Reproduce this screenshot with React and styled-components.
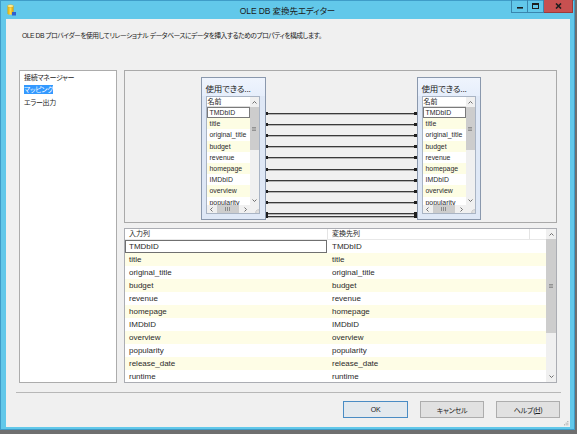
import React from 'react';
import styled, { createGlobalStyle } from 'styled-components';

const GlobalStyle = createGlobalStyle`
  html, body { margin: 0; padding: 0; }
  body {
    width: 577px;
    height: 434px;
    overflow: hidden;
    background: #6f6f6f;
    font-family: "Liberation Sans", "Noto Sans CJK JP", sans-serif;
    font-feature-settings: "palt";
    color: #1b1b1b;
  }
  * { box-sizing: border-box; }
`;

const COLUMNS = [
  'TMDbID', 'title', 'original_title', 'budget', 'revenue', 'homepage',
  'IMDbID', 'overview', 'popularity', 'release_date', 'runtime',
];

const Window = styled.div`
  width: 575px;
  height: 430px;
  background: #62c8ea;
  border: 1px solid #3f9cc8;
  display: flex;
  flex-direction: column;
`;

const TitleBar = styled.div`
  height: 18px;
  display: grid;
  grid-template-columns: 1fr auto 1fr;
  align-items: center;
`;

const AppIcon = styled.svg`
  margin-left: 6px;
  display: block;
`;

const TitleText = styled.div`
  font-size: 8.5px;
  line-height: 12px;
  color: #1a1a1a;
  white-space: nowrap;
  padding-top: 1px;
  letter-spacing: -0.1px;
`;

const Controls = styled.div`
  justify-self: end;
  align-self: start;
  display: flex;
  margin-top: -1px;
  margin-right: 1px;
`;

const CtrlBtn = styled.div`
  width: ${(p) => p.$w}px;
  height: 13px;
  display: flex;
  align-items: center;
  justify-content: center;
  background: ${(p) => (p.$close ? '#c75050' : 'transparent')};
  border: 1px solid ${(p) => (p.$close ? '#9c3b3b' : '#3a86ae')};
  border-top: none;
  & + & { border-left: none; }
`;

const Client = styled.div`
  flex: 1;
  margin: 0 4px 2px 5px;
  background: #f0f0f0;
  display: flex;
  flex-direction: column;
  position: relative;
`;

const Description = styled.div`
  height: 51px;
  padding: 11px 0 0 16px;
  font-size: 6.8px;
  letter-spacing: -0.5px;
  line-height: 12px;
  white-space: nowrap;
`;

const Main = styled.div`
  height: 313px;
  padding: 0 13px;
  display: flex;
  gap: 7px;
`;

const NavList = styled.div`
  width: 98px;
  border: 1px solid #acacac;
  background: #fff;
`;

const NavItem = styled.div`
  height: 12.5px;
  padding-left: 4px;
  display: flex;
  align-items: center;
  font-size: 7px;
  letter-spacing: -0.35px;
`;

const NavLabel = styled.span`
  display: inline-block;
  height: 9px;
  line-height: 9px;
  background: ${(p) => (p.$sel ? '#3399ff' : 'transparent')};
  color: ${(p) => (p.$sel ? '#fff' : '#1b1b1b')};
`;

const RightPanel = styled.div`
  flex: 1;
  display: flex;
  flex-direction: column;
`;

const Diagram = styled.div`
  height: 153px;
  border: 1px solid #a9a9a9;
  background: #f0f0f0;
  display: flex;
  justify-content: center;
  align-items: flex-start;
  padding-top: 6px;
`;

const TableNode = styled.div`
  width: ${(p) => p.$w}px;
  height: 143px;
  border: 1px solid #8a98ad;
  background: #dfe8f6;
  display: flex;
  flex-direction: column;
`;

const NodeTitle = styled.div`
  height: 18px;
  background: linear-gradient(#eff4fd, #e6eefb);
  padding: 5px 0 0 4px;
  font-size: 8.5px;
  letter-spacing: -0.2px;
  line-height: 12px;
  white-space: nowrap;
  color: #1a1a1a;
`;

const NodeList = styled.div`
  margin-left: 4px;
  width: 54px;
  height: 118px;
  border: 1px solid #a9b4c4;
  background: #fff;
  display: grid;
  grid-template-columns: 43px 9px;
  grid-template-rows: 10px 1fr 8px;
`;

const NodeHead = styled.div`
  grid-column: 1;
  grid-row: 1;
  border-bottom: 1px solid #dcdcdc;
  font-size: 7px;
  line-height: 9px;
  padding-left: 1px;
`;

const NodeRows = styled.div`
  grid-column: 1;
  grid-row: 2;
  overflow: hidden;
`;

const NodeRow = styled.div`
  height: 11.2px;
  line-height: ${(p) => (p.$focus ? '9.2px' : '11.2px')};
  font-size: 6.9px;
  padding-left: ${(p) => (p.$focus ? '2px' : '3px')};
  white-space: nowrap;
  overflow: hidden;
  color: #2a2a2a;
  background: ${(p) => (p.$alt ? '#fdfde4' : '#fff')};
  border: ${(p) => (p.$focus ? '1px solid #7a7a7a' : 'none')};
`;

const VScroll = styled.div`
  grid-column: 2;
  grid-row: 1 / span 2;
  background: #f0f0f0;
  display: flex;
  flex-direction: column;
  width: ${(p) => p.$w || 'auto'};
`;

const ArrowBox = styled.div`
  height: ${(p) => p.$h}px;
  width: ${(p) => (p.$wd ? `${p.$wd}px` : 'auto')};
  display: flex;
  align-items: center;
  justify-content: center;
  flex: none;
`;

const Track = styled.div`
  flex: 1;
  display: flex;
  flex-direction: ${(p) => (p.$horiz ? 'row' : 'column')};
`;

const Thumb = styled.div`
  background: #cdcdcd;
  ${(p) => (p.$horiz
    ? `width: ${p.$len}px; margin-left: 1px; height: 100%;`
    : `height: ${p.$len}px; margin-top: ${p.$off || 0}px; width: 100%;`)}
  display: flex;
  align-items: center;
  justify-content: center;
`;

const HScroll = styled.div`
  grid-column: 1;
  grid-row: 3;
  background: #f0f0f0;
  display: flex;
`;

const Corner = styled.div`
  grid-column: 2;
  grid-row: 3;
  background: #f0f0f0;
  display: flex;
  align-items: flex-end;
  justify-content: flex-end;
`;

const Lines = styled.svg`
  display: block;
  flex: none;
`;

const Grid = styled.div`
  flex: 1;
  margin-top: 5px;
  border: 1px solid #abadb3;
  background: #fff;
  display: flex;
  overflow: hidden;
`;

const GridBody = styled.div`
  flex: 1;
  overflow: hidden;
`;

const GridHeader = styled.div`
  display: grid;
  grid-template-columns: 203px 202px;
  height: 11px;
  border-bottom: 1px solid #e8e8e8;
`;

const HeaderCell = styled.div`
  font-size: 7px;
  line-height: 10px;
  padding-left: 4px;
  border-right: 1px solid #e4e4e4;
  color: #222;
`;

const GridRow = styled.div`
  display: grid;
  grid-template-columns: 203px 202px;
  height: 13.05px;
  background: ${(p) => (p.$alt ? '#fefde6' : '#fff')};
`;

const Cell = styled.div`
  font-size: 8px;
  line-height: ${(p) => (p.$focus ? '11px' : '13px')};
  padding-left: ${(p) => (p.$focus ? '3px' : '4px')};
  color: #2a2a2a;
  white-space: nowrap;
  border: ${(p) => (p.$focus ? '1px solid #707070' : 'none')};
  margin-right: ${(p) => (p.$focus ? '1px' : '0')};
`;

const Footer = styled.div`
  display: flex;
  flex-direction: column;
`;

const Separator = styled.div`
  margin: 9px 9px 0 10px;
  height: 1px;
  background: #b7b7b7;
`;

const ButtonRow = styled.div`
  display: flex;
  justify-content: flex-end;
  gap: 12px;
  margin-top: 8px;
  padding-right: 10px;
`;

const Button = styled.div`
  width: ${(p) => p.$w}px;
  height: 17px;
  border: 1px solid ${(p) => (p.$default ? '#4a8cc4' : '#adadad')};
  background: ${(p) => (p.$default ? '#e3e9ee' : '#e1e1e1')};
  font-size: 7px;
  letter-spacing: -0.2px;
  display: flex;
  align-items: center;
  justify-content: center;
  color: #1b1b1b;
`;

const Grip = styled.svg`
  position: absolute;
  right: 1px;
  bottom: 1px;
`;

const Up = ({ w = 5 }) => (
  <svg width={w} height="3" viewBox="0 0 5 3"><path d="M0.5 2.5 L2.5 0.5 L4.5 2.5" fill="none" stroke="#606060" strokeWidth="0.9" /></svg>
);
const Down = ({ w = 5 }) => (
  <svg width={w} height="3" viewBox="0 0 5 3"><path d="M0.5 0.5 L2.5 2.5 L4.5 0.5" fill="none" stroke="#606060" strokeWidth="0.9" /></svg>
);
const Left = () => (
  <svg width="3" height="5" viewBox="0 0 3 5"><path d="M2.5 0.5 L0.5 2.5 L2.5 4.5" fill="none" stroke="#606060" strokeWidth="0.9" /></svg>
);
const Right = () => (
  <svg width="3" height="5" viewBox="0 0 3 5"><path d="M0.5 0.5 L2.5 2.5 L0.5 4.5" fill="none" stroke="#606060" strokeWidth="0.9" /></svg>
);
const GripV = () => (
  <svg width="4" height="4" viewBox="0 0 4 4"><path d="M0 0.5 H4 M0 2 H4 M0 3.5 H4" stroke="#7a7a7a" strokeWidth="0.7" /></svg>
);
const GripH = () => (
  <svg width="5" height="4" viewBox="0 0 5 4"><path d="M0.5 0 V4 M2.5 0 V4 M4.5 0 V4" stroke="#7a7a7a" strokeWidth="0.8" /></svg>
);
const SizeDots = ({ s = 5 }) => (
  <svg width={s} height={s} viewBox="0 0 6 6">
    <rect x="4" y="0" width="1.2" height="1.2" fill="#a0a0a0" />
    <rect x="2" y="2" width="1.2" height="1.2" fill="#a0a0a0" />
    <rect x="4" y="2" width="1.2" height="1.2" fill="#a0a0a0" />
    <rect x="0" y="4" width="1.2" height="1.2" fill="#a0a0a0" />
    <rect x="2" y="4" width="1.2" height="1.2" fill="#a0a0a0" />
    <rect x="4" y="4" width="1.2" height="1.2" fill="#a0a0a0" />
  </svg>
);

function NodeTable({ w }) {
  return (
    <TableNode $w={w}>
      <NodeTitle>使用できる...</NodeTitle>
      <NodeList>
        <NodeHead>名前</NodeHead>
        <VScroll>
          <ArrowBox $h={10}><Up /></ArrowBox>
          <Track>
            <Thumb $len={43}><GripV /></Thumb>
          </Track>
          <ArrowBox $h={9}><Down /></ArrowBox>
        </VScroll>
        <NodeRows>
          {COLUMNS.map((c, i) => (
            <NodeRow key={c} $alt={i % 2 === 1} $focus={i === 0}>{c}</NodeRow>
          ))}
        </NodeRows>
        <HScroll>
          <ArrowBox $h={8} $wd={9}><Left /></ArrowBox>
          <Track $horiz>
            <Thumb $horiz $len={22}><GripH /></Thumb>
          </Track>
          <ArrowBox $h={8} $wd={9}><Right /></ArrowBox>
        </HScroll>
        <Corner><SizeDots s={4} /></Corner>
      </NodeList>
    </TableNode>
  );
}

const LINE_Y = Array.from({ length: 9 }, (_, i) => Math.round(35.6 + 11.2 * i)).concat([136, 139]);

function MappingLines() {
  return (
    <Lines width="151" height="143" viewBox="0 0 151 143">
      {LINE_Y.map((y, i) => (
        <g key={i}>
          <rect x="0" y={y} width="151" height="1" fill="#3a3a3a" />
          <rect x="0" y={y + 1} width="151" height="1" fill="#b4b4b4" />
          <rect x="0" y={y - 1} width="2" height="3" fill="#1e1e1e" />
          <rect x="148" y={y - 1} width="3" height="3" fill="#1e1e1e" />
        </g>
      ))}
    </Lines>
  );
}

export default function App() {
  return (
    <>
      <GlobalStyle />
      <Window>
        <TitleBar>
          <AppIcon width="9" height="12" viewBox="0 0 9 12">
            <defs>
              <linearGradient id="cyl" x1="0" x2="1">
                <stop offset="0" stopColor="#e0a800" />
                <stop offset="0.5" stopColor="#ffd94a" />
                <stop offset="1" stopColor="#d89a00" />
              </linearGradient>
            </defs>
            <path d="M0.5 2 V9.5 A3 1.3 0 0 0 6.5 9.5 V2 Z" fill="url(#cyl)" />
            <ellipse cx="3.5" cy="2" rx="3" ry="1.3" fill="#fff0a0" stroke="#d0a000" strokeWidth="0.4" />
            <rect x="5" y="8" width="4" height="3.5" fill="#2f5fd0" />
          </AppIcon>
          <TitleText>OLE DB 変換先エディター</TitleText>
          <Controls>
            <CtrlBtn $w={17}>
              <svg width="6" height="6" viewBox="0 0 6 6"><rect x="0" y="4" width="6" height="1.6" fill="#1e1e1e" /></svg>
            </CtrlBtn>
            <CtrlBtn $w={16}>
              <svg width="7" height="6" viewBox="0 0 7 6"><rect x="0.5" y="0.5" width="6" height="5" fill="none" stroke="#1e1e1e" strokeWidth="1" /><rect x="0" y="0" width="7" height="2" fill="#1e1e1e" /></svg>
            </CtrlBtn>
            <CtrlBtn $w={29} $close>
              <svg width="7" height="6" viewBox="0 0 7 6"><path d="M1 0.5 L6 5.5 M6 0.5 L1 5.5" stroke="#1e1e1e" strokeWidth="1.6" /></svg>
            </CtrlBtn>
          </Controls>
        </TitleBar>
        <Client>
          <Description>
            OLE DB プロバイダーを使用してリレーショナル データベースにデータを挿入するためのプロパティを構成します。
          </Description>
          <Main>
            <NavList>
              <NavItem><NavLabel>接続マネージャー</NavLabel></NavItem>
              <NavItem><NavLabel $sel>マッピング</NavLabel></NavItem>
              <NavItem><NavLabel>エラー出力</NavLabel></NavItem>
            </NavList>
            <RightPanel>
              <Diagram>
                <NodeTable w={65} />
                <MappingLines />
                <NodeTable w={64} />
              </Diagram>
              <Grid>
                <GridBody>
                  <GridHeader>
                    <HeaderCell>入力列</HeaderCell>
                    <HeaderCell>変換先列</HeaderCell>
                  </GridHeader>
                  {COLUMNS.map((c, i) => (
                    <GridRow key={c} $alt={i % 2 === 1}>
                      <Cell $focus={i === 0}>{c}</Cell>
                      <Cell>{c}</Cell>
                    </GridRow>
                  ))}
                </GridBody>
                <VScroll $w="10px">
                  <ArrowBox $h={10}><Up /></ArrowBox>
                  <Track>
                    <Thumb $len={94}><GripV /></Thumb>
                  </Track>
                  <ArrowBox $h={11}><Down /></ArrowBox>
                </VScroll>
              </Grid>
            </RightPanel>
          </Main>
          <Footer>
            <Separator />
            <ButtonRow>
              <Button $w={65} $default>OK</Button>
              <Button $w={64}>キャンセル</Button>
              <Button $w={64}>ヘルプ(<u>H</u>)</Button>
            </ButtonRow>
          </Footer>
          <Grip width="5" height="5" viewBox="0 0 6 6">
            <rect x="4" y="0" width="1.2" height="1.2" fill="#a0a0a0" />
            <rect x="2" y="2" width="1.2" height="1.2" fill="#a0a0a0" />
            <rect x="4" y="2" width="1.2" height="1.2" fill="#a0a0a0" />
            <rect x="0" y="4" width="1.2" height="1.2" fill="#a0a0a0" />
            <rect x="2" y="4" width="1.2" height="1.2" fill="#a0a0a0" />
            <rect x="4" y="4" width="1.2" height="1.2" fill="#a0a0a0" />
          </Grip>
        </Client>
      </Window>
    </>
  );
}
